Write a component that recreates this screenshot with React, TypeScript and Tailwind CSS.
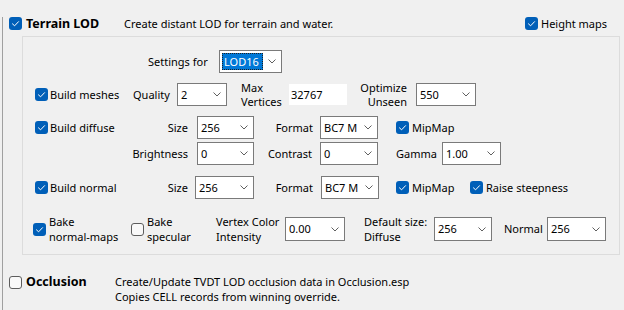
import type { ReactNode } from "react";

function CheckBox({ checked = false }: { checked?: boolean }) {
  if (!checked) {
    return <span className="block h-[13px] w-[13px] shrink-0 rounded-[3px] border border-[#5d5d5d] bg-[#f9f9f9]" />;
  }
  return (
    <span className="flex h-[13px] w-[13px] shrink-0 items-center justify-center rounded-[3px] bg-[#005fb8]">
      <svg width="9" height="7" viewBox="0 0 9 7" aria-hidden>
        <path d="M1.2 3.6 L3.6 5.8 L7.8 1.4" fill="none" stroke="#ffffff" strokeWidth="1" />
      </svg>
    </span>
  );
}

function Chevron() {
  return (
    <svg width="8" height="5" viewBox="0 0 8 5" aria-hidden className="shrink-0">
      <path d="M0.5 0.5 L4 4 L7.5 0.5" fill="none" stroke="#606060" strokeWidth="1" />
    </svg>
  );
}

function Combo({ className, value }: { className: string; value: string }) {
  return (
    <div className={`flex h-full shrink-0 items-center justify-between border border-[#7a7a7a] bg-white pl-[3px] pr-[5px] ${className}`}>
      <span>{value}</span>
      <Chevron />
    </div>
  );
}

function Label({ className, children }: { className: string; children: ReactNode }) {
  return <div className={`shrink-0 whitespace-nowrap ${className}`}>{children}</div>;
}

export default function App() {
  return (
    <div className="h-[310px] w-[624px] overflow-hidden bg-[#f0f0f0] pl-[2px] font-['Noto_Sans','Segoe_UI',sans-serif] text-[11px] leading-[16px] text-black">
      <div className="h-full border-l border-[#a0a0a0]">
        {/* header */}
        <div className="mt-[17px] flex h-[13px] items-center pl-[6px]">
          <CheckBox checked />
          <Label className="ml-[4px] w-[98px] text-[12.5px] font-bold">Terrain LOD</Label>
          <Label className="w-[401px]">Create distant LOD for terrain and water.</Label>
          <CheckBox checked />
          <Label className="ml-[3px]">Height maps</Label>
        </div>

        {/* terrain settings panel */}
        <div className="ml-[19px] mt-[6px] h-[219px] w-[598px] border border-[#dcdcdc]">
          <div className="mt-[13px] flex h-[23px] items-center">
            <Label className="ml-[125px] w-[71px]">Settings for</Label>
            <div className="flex h-full w-[63px] shrink-0 items-center justify-between border border-[#7a7a7a] bg-white pl-[2px] pr-[5px]">
              <span className="flex h-[17px] w-[41px] items-center border border-dotted border-[#202020] bg-[#0078d7] pl-[1px] text-white">
                LOD16
              </span>
              <Chevron />
            </div>
          </div>

          <div className="mt-[10px] flex h-[23px] items-center">
            <span className="ml-[12px]">
              <CheckBox checked />
            </span>
            <Label className="ml-[2px] w-[83px]">Build meshes</Label>
            <Label className="w-[44px]">Quality</Label>
            <Combo className="w-[50px]" value="2" />
            <Label className="ml-[14px] w-[48px] leading-[14px]">
              Max
              <br />
              Vertices
            </Label>
            <div className="flex h-[21px] w-[58px] shrink-0 items-center bg-white pl-[2px]">32767</div>
            <Label className="w-[69px] pr-[9px] text-right leading-[14px]">
              Optimize
              <br />
              Unseen
            </Label>
            <Combo className="w-[60px]" value="550" />
          </div>

          <div className="mt-[10px] flex h-[23px] items-center">
            <span className="ml-[12px]">
              <CheckBox checked />
            </span>
            <Label className="ml-[2px] w-[83px]">Build diffuse</Label>
            <Label className="w-[64px] pr-[9px] text-right">Size</Label>
            <Combo className="w-[57px]" value="256" />
            <Label className="w-[66px] pr-[7px] text-right">Format</Label>
            <Combo className="w-[58px]" value="BC7 M" />
            <span className="ml-[18px]">
              <CheckBox checked />
            </span>
            <Label className="ml-[3px]">MipMap</Label>
          </div>

          <div className="mt-[3px] flex h-[23px] items-center">
            <Label className="w-[174px] pr-[9px] text-right">Brightness</Label>
            <Combo className="w-[57px]" value="0" />
            <Label className="w-[66px] pr-[8px] text-right">Contrast</Label>
            <Combo className="w-[58px]" value="0" />
            <Label className="ml-[18px] w-[46px]">Gamma</Label>
            <Combo className="w-[59px]" value="1.00" />
          </div>

          <div className="mt-[11px] flex h-[23px] items-center">
            <span className="ml-[12px]">
              <CheckBox checked />
            </span>
            <Label className="ml-[2px] w-[83px]">Build normal</Label>
            <Label className="w-[62px] pr-[7px] text-right">Size</Label>
            <Combo className="w-[59px]" value="256" />
            <Label className="w-[67px] pr-[8px] text-right">Format</Label>
            <Combo className="w-[58px]" value="BC7 M" />
            <span className="ml-[17px]">
              <CheckBox checked />
            </span>
            <Label className="ml-[3px] w-[58px]">MipMap</Label>
            <CheckBox checked />
            <Label className="ml-[3px]">Raise steepness</Label>
          </div>

          <div className="mt-[18px] flex h-[24px] items-center">
            <span className="ml-[10px]">
              <CheckBox checked />
            </span>
            <Label className="ml-[3px] w-[82px] leading-[15px]">
              Bake
              <br />
              normal-maps
            </Label>
            <CheckBox />
            <Label className="ml-[3px] w-[69px] leading-[15px]">
              Bake
              <br />
              specular
            </Label>
            <Label className="w-[69px] leading-[15px]">
              Vertex Color
              <br />
              Intensity
            </Label>
            <Combo className="w-[60px]" value="0.00" />
            <Label className="ml-[19px] w-[70px] leading-[15px]">
              Default size:
              <br />
              Diffuse
            </Label>
            <Combo className="w-[58px]" value="256" />
            <Label className="w-[55px] pl-[12px]">Normal</Label>
            <Combo className="w-[59px]" value="256" />
          </div>
        </div>

        {/* occlusion */}
        <div className="mt-[19px] flex items-start pl-[6px] leading-[15px]">
          <span className="mt-[2px]">
            <CheckBox />
          </span>
          <Label className="ml-[4px] w-[89px] text-[12.5px] font-bold">Occlusion</Label>
          <div>
            <div>Create/Update TVDT LOD occlusion data in Occlusion.esp</div>
            <div>Copies CELL records from winning override.</div>
          </div>
        </div>
      </div>
    </div>
  );
}
